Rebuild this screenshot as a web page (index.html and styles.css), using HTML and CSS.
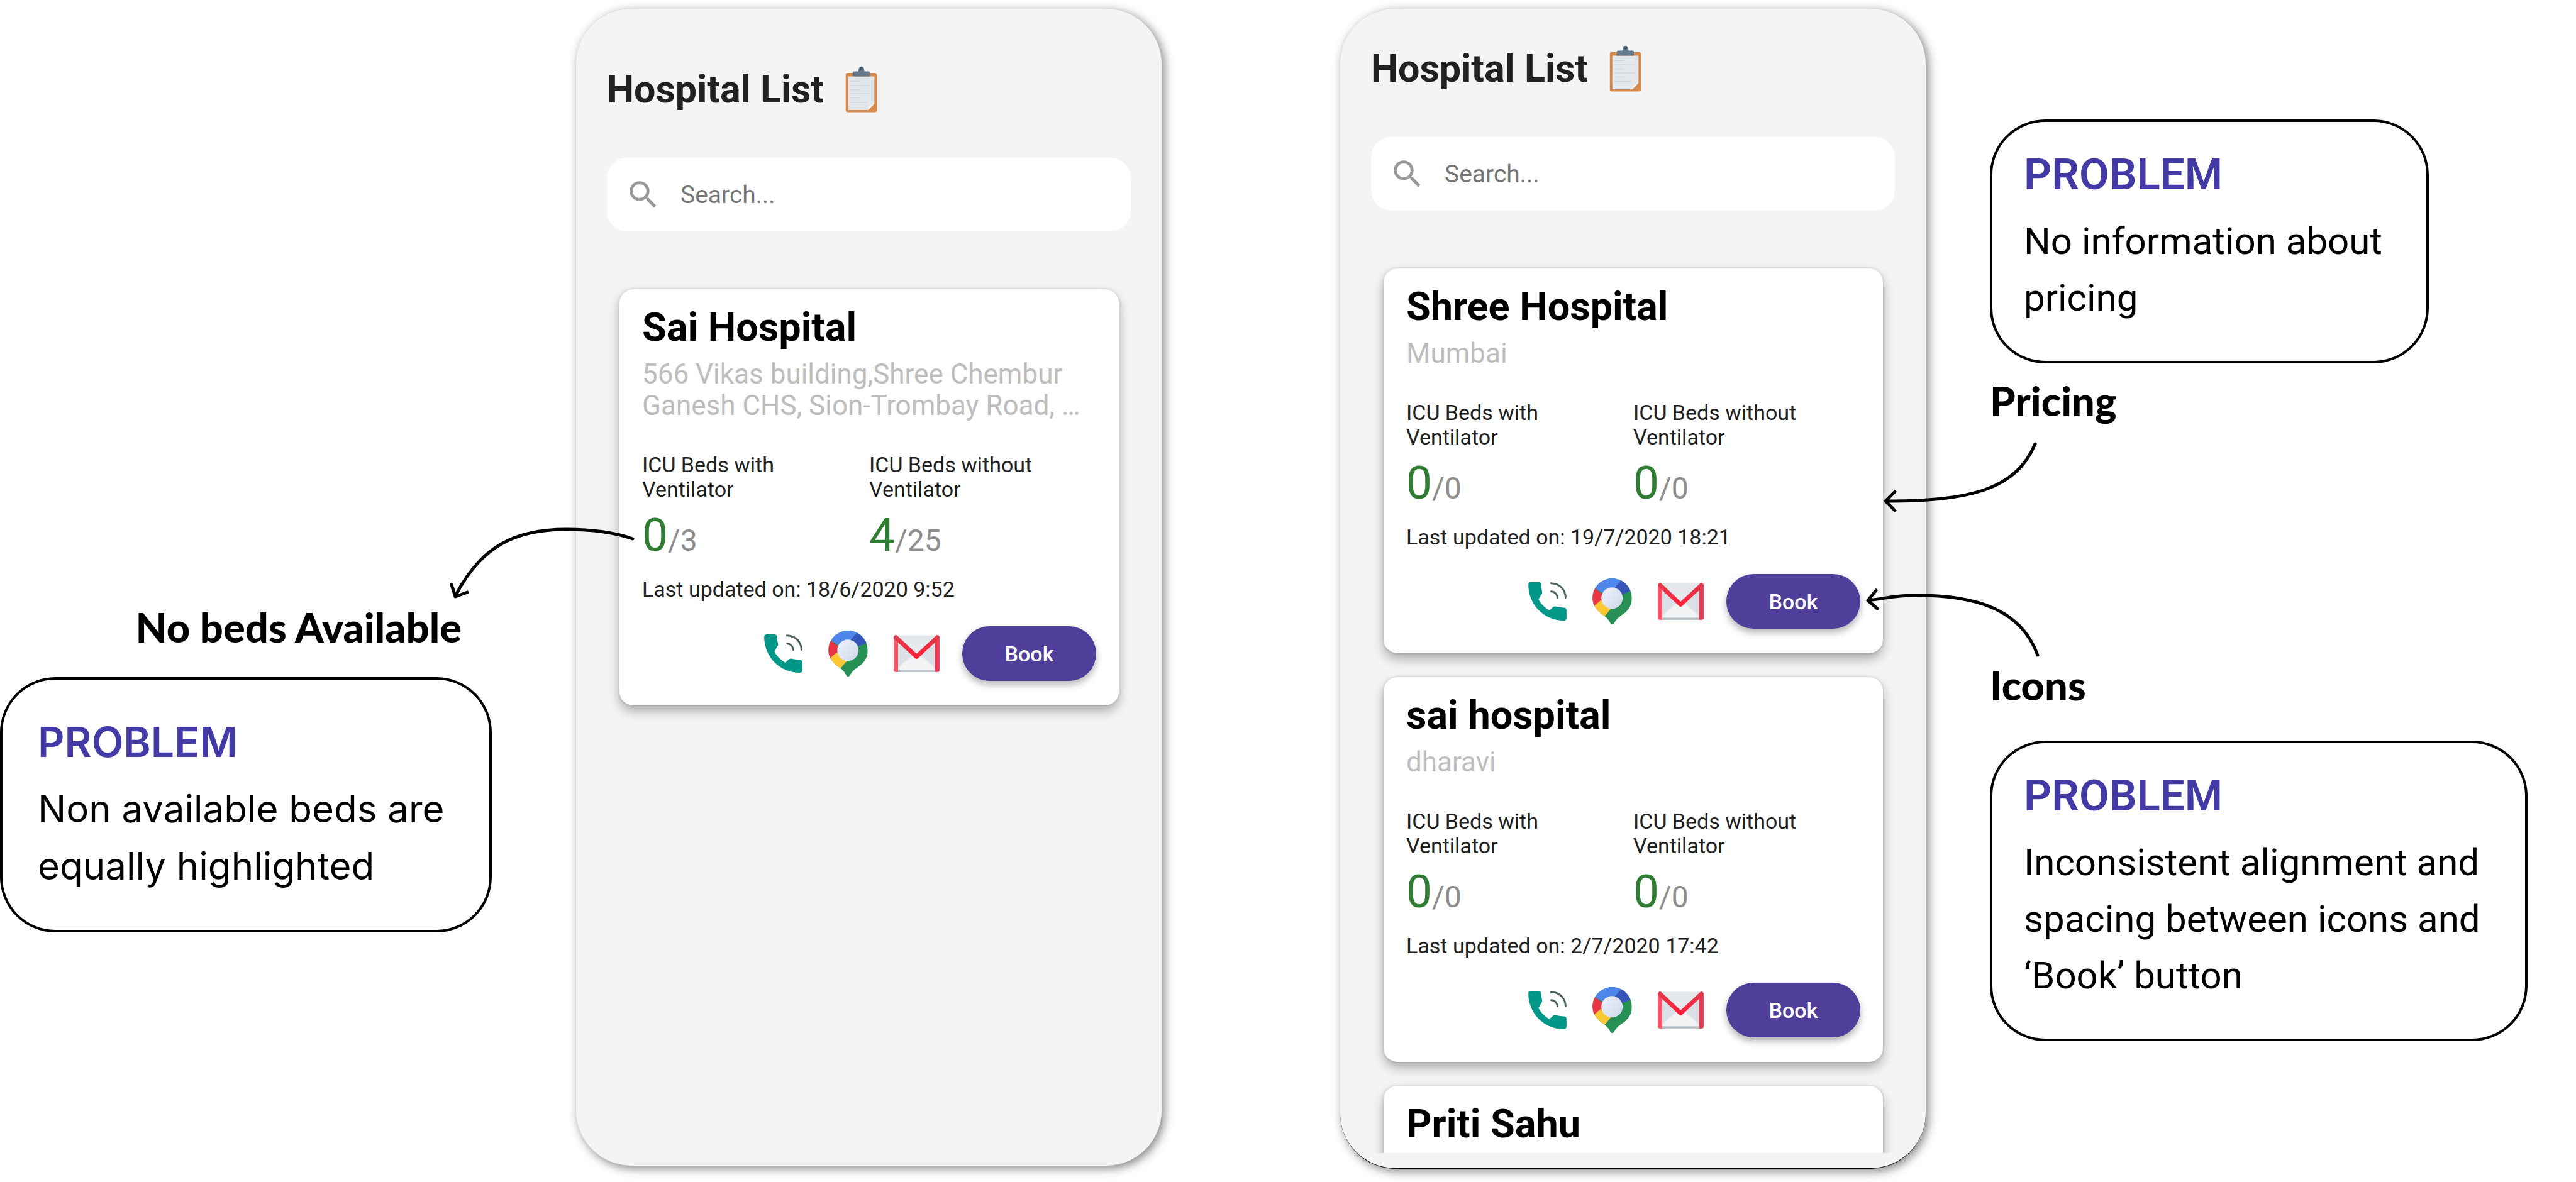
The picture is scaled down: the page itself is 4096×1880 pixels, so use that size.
FILE: index.html
```html
<!DOCTYPE html>
<html lang="en">
<head>
<meta charset="utf-8">
<meta name="viewport" content="width=device-width, initial-scale=1">
<title>Hospital List review</title>
<link rel="stylesheet" href="styles.css">
</head>
<body>
<svg class="sprite" aria-hidden="true">
  <defs>
    <linearGradient id="pin-hole" x1="0" y1="0" x2="1" y2="1">
      <stop offset="0" stop-color="#eef2fb"/><stop offset="1" stop-color="#cfd8ea"/>
    </linearGradient>
    <linearGradient id="mail-paper" x1="0" y1="0" x2="0" y2="1">
      <stop offset="0" stop-color="#e4e7ea"/><stop offset=".85" stop-color="#eceff0"/><stop offset="1" stop-color="#a9b2bb"/>
    </linearGradient>
    <linearGradient id="mail-flap" x1="0" y1="0" x2="0" y2="1">
      <stop offset="0" stop-color="#e0394b"/><stop offset="1" stop-color="#ff2038"/>
    </linearGradient>
    <linearGradient id="mail-side" x1="0" y1="0" x2="1" y2="0">
      <stop offset="0" stop-color="#ff5468"/><stop offset="1" stop-color="#e93850"/>
    </linearGradient>
    <clipPath id="pin-shape">
      <path d="M494 101c60 0 109 49 109 109 0 38-17 66-46 87-26 18-42 30-52 52q-4 6-11 6t-10-6c-10-22-25-35-49-51C409 275 385 250 385 210c0-60 49-109 109-109z"/>
    </clipPath>
  </defs>
  <symbol id="clipboard" viewBox="60 36 178 260">
    <rect x="62" y="75" width="174" height="219" rx="12" fill="#d98a4b"/>
    <path d="M76 94H222V246L188 282H76z" fill="#e2e7eb"/>
    <path d="M222 246L188 282V270q0-8 8-10z" fill="#f6f7f8"/>
    <path d="M84 122h58M84 145h120M84 168h58M84 191h120M84 214h58M84 239h96" stroke="#d0d6da" stroke-width="5"/>
    <path d="M100 94V74q0-8 8-8h24q2-6 2-12a15 15 0 0 1 31 0q0 6 2 12h22q8 0 8 8v20z" fill="#64798c"/>
    <circle cx="150" cy="51" r="8" fill="#3c5067"/>
  </symbol>
  <symbol id="search" viewBox="0 0 24 24">
    <path fill="#9a9a9a" d="M15.5 14h-.79l-.28-.27A6.47 6.47 0 0 0 16 9.5 6.5 6.5 0 1 0 9.5 16c1.61 0 3.09-.59 4.23-1.57l.27.28v.79l5 4.99L20.49 19l-4.99-5zm-6 0C7.01 14 5 11.99 5 9.5S7.01 5 9.5 5 14 7.01 14 9.5 11.99 14 9.5 14z"/>
  </symbol>
  <symbol id="phone" viewBox="30 122 210 211">
    <path fill="#009688" d="M44 122h42q13 0 14 14c1 14 3 26 6 38q2 8-4 15L86 216c12 24 34 46 60 61l20-18q6-5 14-4c12 4 30 6 46 7q14 1 14 14v42q0 14-14 15C110 333 30 240 30 136q0-14 14-14z"/>
    <path d="M155 128c50 2 79 37 80 79M156 173c21 1 34 17 34 35" fill="none" stroke="#4a625f" stroke-width="10" stroke-linecap="round"/>
  </symbol>
  <symbol id="pin" viewBox="385 101 218 254">
    <g clip-path="url(#pin-shape)">
      <rect x="385" y="101" width="218" height="254" fill="#279055"/>
      <path d="M494 210L380 146V90h180z" fill="#4f86ec"/>
      <path d="M494 170L558 95l60 65-74 32z" fill="#3456b8"/>
      <path d="M494 228L380 142v122z" fill="#ea3547"/>
      <path d="M430 222L375 270l60 60 58-68z" fill="#fcc934"/>
    </g>
    <circle cx="493" cy="210" r="59" fill="url(#pin-hole)"/>
  </symbol>
  <symbol id="mail" viewBox="747 126 253 205">
    <path d="M755 128H992V330H755z" fill="url(#mail-paper)"/>
    <path d="M771 165L845 240 771 305zM975 165L901 240 975 305z" fill="#dbe0e6"/>
    <path d="M771 310L873 226 975 310V318H771z" fill="#f1f3f4"/>
    <path d="M747 140L771 155V330H757q-10 0-10-10zM1000 140L975 155V330h15q10 0 10-10z" fill="url(#mail-side)"/>
    <path d="M759 139L873 246 988 139" fill="none" stroke="url(#mail-flap)" stroke-width="24" stroke-linecap="round" stroke-linejoin="round"/>
  </symbol>
</svg>

<main class="board">
  <aside class="notes notes-left">
    <h2 class="label label-end">No beds Available</h2>
    <section class="callout callout-inter">
      <h3>PROBLEM</h3>
      <p>Non available beds are<br>equally highlighted</p>
    </section>
  </aside>

  <section class="phone phone-single">
    <header class="title"><h1>Hospital List</h1><svg class="icon-clipboard"><use href="#clipboard"/></svg></header>
    <label class="search"><svg class="icon-search"><use href="#search"/></svg><input type="search" placeholder="Search..." aria-label="Search hospitals"></label>
    <div class="list">
      <article class="card">
        <h2>Sai Hospital</h2>
        <p class="address">566 Vikas building,Shree Chembur Ganesh CHS, Sion-Trombay Road, …</p>
        <dl class="beds">
          <div><dt>ICU Beds with<br>Ventilator</dt><dd><b>0</b>/3</dd></div>
          <div><dt>ICU Beds without<br>Ventilator</dt><dd><b>4</b>/25</dd></div>
        </dl>
        <p class="updated">Last updated on: 18/6/2020 9:52</p>
        <div class="actions">
          <a href="#call" aria-label="Call"><svg class="icon-phone"><use href="#phone"/></svg></a>
          <a href="#map" aria-label="Map"><svg class="icon-pin"><use href="#pin"/></svg></a>
          <a href="#mail-to" aria-label="Email"><svg class="icon-mail"><use href="#mail"/></svg></a>
          <button class="book" type="button">Book</button>
        </div>
      </article>
    </div>
  </section>

  <section class="phone phone-scrolled">
    <header class="title"><h1>Hospital List</h1><svg class="icon-clipboard"><use href="#clipboard"/></svg></header>
    <label class="search"><svg class="icon-search"><use href="#search"/></svg><input type="search" placeholder="Search..." aria-label="Search hospitals"></label>
    <div class="list">
      <article class="card">
        <h2>Shree Hospital</h2>
        <p class="address">Mumbai</p>
        <dl class="beds">
          <div><dt>ICU Beds with<br>Ventilator</dt><dd><b>0</b>/0</dd></div>
          <div><dt>ICU Beds without<br>Ventilator</dt><dd><b>0</b>/0</dd></div>
        </dl>
        <p class="updated">Last updated on: 19/7/2020 18:21</p>
        <div class="actions">
          <a href="#call" aria-label="Call"><svg class="icon-phone"><use href="#phone"/></svg></a>
          <a href="#map" aria-label="Map"><svg class="icon-pin"><use href="#pin"/></svg></a>
          <a href="#mail-to" aria-label="Email"><svg class="icon-mail"><use href="#mail"/></svg></a>
          <button class="book" type="button">Book</button>
        </div>
      </article>
      <article class="card">
        <h2>sai hospital</h2>
        <p class="address">dharavi</p>
        <dl class="beds">
          <div><dt>ICU Beds with<br>Ventilator</dt><dd><b>0</b>/0</dd></div>
          <div><dt>ICU Beds without<br>Ventilator</dt><dd><b>0</b>/0</dd></div>
        </dl>
        <p class="updated">Last updated on: 2/7/2020 17:42</p>
        <div class="actions">
          <a href="#call" aria-label="Call"><svg class="icon-phone"><use href="#phone"/></svg></a>
          <a href="#map" aria-label="Map"><svg class="icon-pin"><use href="#pin"/></svg></a>
          <a href="#mail-to" aria-label="Email"><svg class="icon-mail"><use href="#mail"/></svg></a>
          <button class="book" type="button">Book</button>
        </div>
      </article>
      <article class="card card-cut">
        <h2>Priti Sahu</h2>
      </article>
    </div>
  </section>

  <aside class="notes notes-right">
    <section class="callout callout-narrow">
      <h3>PROBLEM</h3>
      <p>No information about<br>pricing</p>
    </section>
    <h2 class="label label-pricing">Pricing</h2>
    <h2 class="label label-icons">Icons</h2>
    <section class="callout">
      <h3>PROBLEM</h3>
      <p>Inconsistent alignment and<br>spacing between icons and<br>‘Book’ button</p>
    </section>
  </aside>

  <svg class="arrows" viewBox="0 0 4096 1880" aria-hidden="true">
    <path d="M1006 857C975 846 940 842 900 842C820 842 765 868 724 948M718 930L724 949L743 942"/>
    <path d="M3236 706C3205 780 3130 797 2998 797M3013 782L2998 797L3013 812"/>
    <path d="M3240 1042C3213 968 3140 947 3050 947C3010 947 3005 951 2970 955M2983 939L2970 955L2985 968"/>
  </svg>
</main>
</body>
</html>
```
FILE: styles.css
```css
* { box-sizing: border-box; }

body {
  margin: 0;
  background: #fff;
  color: #000;
  font-family: Roboto, "Liberation Sans", sans-serif;
}

h1, h2, h3, p, dl, dd { margin: 0; }

.sprite { position: absolute; width: 0; height: 0; }

.board {
  position: relative;
  display: grid;
  grid-template-columns: 916fr 931fr 284fr 931fr 1034fr;
  height: 100vh;
  padding: 14px 0 21px;
  overflow: hidden;
}

/* annotations */
.notes { display: flex; flex-direction: column; }
.notes-left { grid-column: 1; padding: 943px 134px 0 0; }
.notes-right { grid-column: 5; padding: 176px 77px 0 102px; }

.label {
  font: 900 65px/80px Lato, "Open Sans", sans-serif;
}
.label-end { margin: 0 48px 40px 0; text-align: right; }
.label-pricing { margin: 19px 0 372px; }
.label-icons { margin-bottom: 49px; }

.callout {
  padding: 44px 48px 55px 50px;
  border: 4px solid #000;
  border-radius: 88px;
}
.callout-narrow { max-width: 698px; }
.callout h3 {
  margin-bottom: 21px;
  color: #443aa6;
  font-size: 69px;
  font-weight: 600;
  line-height: 80px;
}
.callout p { font-size: 60px; line-height: 90px; }

.callout-inter {
  padding: 59px 53px 56px 56px;
  font-family: Inter, "Liberation Sans", sans-serif;
}
.callout-inter h3 { font-size: 66px; }
.callout-inter p { line-height: 91px; }

.arrows {
  position: absolute;
  top: 0;
  left: 0;
  width: 100%;
  fill: none;
  stroke: #000;
  stroke-width: 5;
  stroke-linecap: round;
  stroke-linejoin: round;
  pointer-events: none;
}

/* phone screens */
.phone {
  display: flex;
  flex-direction: column;
  min-height: 0;
  padding: 0 49px 24px;
  border-radius: 88px;
  background: #f4f4f4;
  box-shadow: 4px 4px 16px rgba(0, 0, 0, .5);
}
.phone-single { grid-column: 2; margin-bottom: 5px; padding-top: 92px; }
.phone-scrolled { grid-column: 4; padding-top: 59px; border-bottom: 1px solid #000; }

.title { display: flex; align-items: center; gap: 34px; }
.title h1 { color: #212121; font-size: 61px; line-height: 72px; }
.icon-clipboard { width: 51px; height: 74px; margin: -1px 0; }

.search {
  display: flex;
  align-items: center;
  flex: none;
  gap: 30px;
  height: 117px;
  margin-top: 73px;
  padding: 0 29px;
  border-radius: 32px;
  background: #fff;
}
.icon-search { flex: none; width: 58px; height: 58px; }
.search input {
  flex: 1;
  min-width: 0;
  padding: 0;
  border: 0;
  outline: 0;
  background: none;
  font: 39px/46px Roboto, "Liberation Sans", sans-serif;
}
.search input::placeholder { color: #757575; opacity: 1; }

.list {
  display: flex;
  flex: 1;
  flex-direction: column;
  gap: 38px;
  min-height: 0;
  margin: 72px -1px 0 0;
  padding: 20px 20px 0;
  overflow: hidden;
}

.card {
  flex: none;
  padding: 24px 36px 39px;
  border-radius: 22px;
  background: #fff;
  box-shadow: 0 9px 18px rgba(0, 0, 0, .3), 0 0 5px rgba(0, 0, 0, .14);
}
.card-cut { min-height: 612px; }
.card h2 { font-size: 63px; line-height: 74px; }
.address { margin-top: 12px; color: #bdbdbd; font-size: 44px; line-height: 50px; }

.beds {
  display: grid;
  grid-template-columns: 1fr 1fr;
  margin-top: 50px;
}
.beds dt, .updated { color: #212121; font-size: 34px; line-height: 39px; }
.beds dd { margin-top: 10px; color: #8e8e8e; font-size: 48px; line-height: 60px; }
.beds b { color: #2e7d32; font-size: 73px; font-weight: 400; line-height: 86px; }
.updated { margin-top: 24px; }

.actions {
  display: flex;
  align-items: center;
  justify-content: flex-end;
  gap: 41px;
  margin-top: 39px;
}
.actions a { display: flex; }
.icon-phone { width: 61px; height: 61px; }
.icon-pin { width: 63px; height: 73px; }
.icon-mail { width: 73px; height: 59px; }

.book {
  width: 213px;
  height: 87px;
  margin-left: -5px;
  padding: 0;
  border: 0;
  border-radius: 44px;
  background: #503e9b;
  box-shadow: 0 6px 12px rgba(0, 0, 0, .3);
  color: #fff;
  font: 500 34px/40px Roboto, "Liberation Sans", sans-serif;
}
```
